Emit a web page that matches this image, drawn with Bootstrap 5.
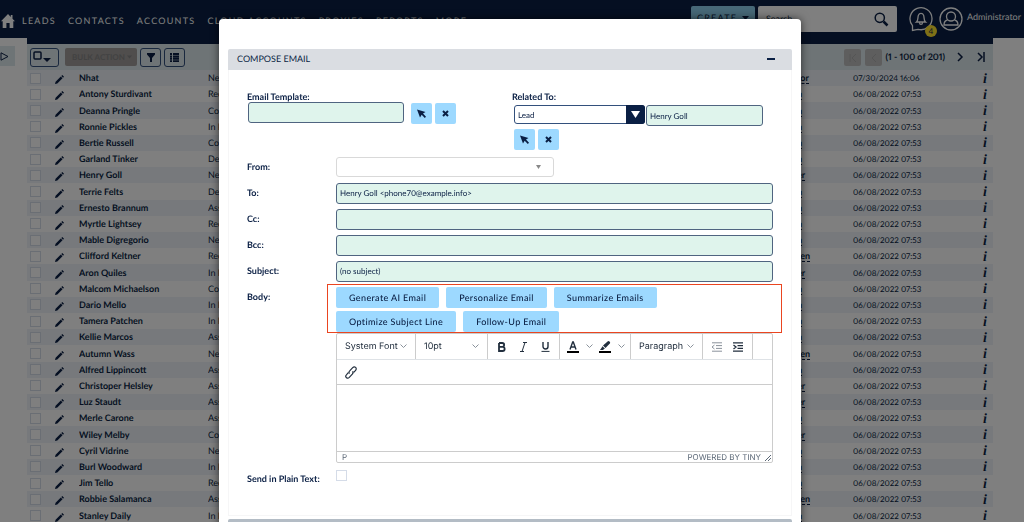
<!DOCTYPE html>
<html lang="en">
<head>
<meta charset="utf-8">
<meta name="viewport" content="width=device-width, initial-scale=1">
<title>Leads - Compose Email</title>
<link href="https://cdn.jsdelivr.net/npm/bootstrap@5.3.0/dist/css/bootstrap.min.css" rel="stylesheet">
<style>
:root{--navy:#0a1f44;--sky:#9dd9ff;--mint:#dff4ec}
body{font-family:Lato,sans-serif;font-size:9px;line-height:12px;color:var(--navy);background:#fff;text-rendering:geometricPrecision;font-variant-numeric:proportional-nums}
button,input,select{font-family:inherit;text-rendering:inherit}
a{color:inherit;text-decoration:none}
svg{display:block;flex:none}
/* top bar */
.topbar{background:var(--navy);height:38px;color:#fff}
.topbar .mainnav{gap:12px;padding:4px 0 0 1px}
.mainnav a{letter-spacing:.14em;white-space:nowrap}
.mainnav .home{margin-right:-5px}
.create{background:#8fd0ee;color:var(--navy);width:64px;height:26px;font-size:9px;letter-spacing:.14em;border:0;border-radius:2px;padding:0 6px 3px 6px}
.searchbox{background:#fff;border-radius:2px;width:139px;height:26px;margin-left:3px;padding:0 8px}
.searchbox input{border:0;outline:0;width:100%;font-size:9px;background:none;padding:0}
.searchbox input::placeholder{color:var(--navy)}
.bell{margin-left:12px}
.who{margin-right:-6px}
.count{right:-4px;bottom:-5px;width:12px;height:12px;background:#ffe22e;color:var(--navy);font-size:8px}
/* list view */
.sheet{margin:0 31px 0 27px;border-top:6px solid var(--navy)}
.strip{background:#dde8ec;height:26px;padding:0 3px}
.tool{border:1px solid #33507c;border-radius:3px;background:none;height:19px;width:21px;padding:0;color:var(--navy)}
.tool.wide{width:29px}
.bulk{background:#a09c9a;border:0;border-radius:2px;width:72px;height:18px;font-size:8px;font-weight:700;color:#858585;white-space:nowrap;padding:0 5px 0 7px}
.pg{background:#bdbdbd;border:0;border-radius:2px;width:17px;height:17px;color:#999;padding:0}
.leads{width:100%;table-layout:fixed;height:454px}
.leads td{padding:0;height:16px;line-height:14px;white-space:nowrap;overflow:hidden;vertical-align:middle}
.leads tr:nth-child(odd){background:#eef3f8}
.leads input,.plain{appearance:none;width:11px;height:11px;border:1px solid #d5dce8;background:#fff;margin:0;display:block}
.leads input{margin-left:3px}
.leads .own a{border-bottom:1px dashed var(--navy);display:inline-block;line-height:10px}
.leads .when{font-size:8px}
.leads .inf{font:italic bold 14px/12px "Liberation Serif",serif;padding:3px 6px 0 0;text-align:right}
.sidetab{left:0;top:46px;width:15px;height:20px;background:#dde8ec}
/* dialog */
.modal-backdrop{--bs-backdrop-opacity:.5}
.compose{max-width:582px;margin:19px auto 0;padding:0}
.modal{padding-right:4px}
.compose .modal-content{border:0;border-radius:4px;padding:30px 9px 0;box-shadow:0 0 8px rgba(0,0,0,.6);color:var(--navy);overflow:hidden}
.bar{background:#dadde2;height:21px;padding:0 17px 2px 9px;border-radius:2px 2px 0 0}
.bar.next{background:#b3bcc5;margin-top:3px}
.box{border:1px solid #f6f6f7;border-top:0;padding:21px 18px 30px;margin-bottom:0}
.lab{font-weight:700;width:89px;flex:none}
.field{background:var(--mint);border:1px solid #4f6480;border-radius:3px;height:21px;padding:0 3px;font-size:8px;color:var(--navy);min-width:0}
.formrow{height:26px}
.mini{background:var(--sky);border:0;border-radius:2px;width:21px;height:21px;padding:0;color:var(--navy)}
.selwrap{width:131px;height:19px}
.selwrap select{appearance:none;width:100%;height:19px;border:1px solid #33507c;border-radius:3px;padding:0 3px;background:#fff;color:var(--navy);font-size:8px}
.selwrap .arr{right:0;top:0;width:19px;height:19px;background:var(--navy);border-radius:0 3px 3px 0;pointer-events:none}
.fromwrap{width:218px}
.fromwrap select{appearance:none;width:100%;height:20px;border:1px solid #d9d9d9;border-radius:3px;background:#fff;display:block}
.fromwrap svg{right:13px;top:8px;pointer-events:none}
.ai{border:1px solid #ea4520;margin:0 -9px;padding:2px 8px 0;gap:3px 7px}
.ai button{background:var(--sky);border:0;border-radius:2px;height:21px;padding:0 13px;font-size:9px;letter-spacing:.04em;color:var(--navy);font-weight:500}
.tiny{border:1px solid #ccc;border-radius:2px;font-family:Inter,sans-serif;color:#222f3e}
.tiny button{background:none;border:0;padding:0;color:inherit;font-size:9px}
.tb{height:25px}
.tiny .grp{border-right:1px solid #ccc;height:25px;padding:0 8px}
.edit{border-top:1px solid #ccc;height:67px}
.foot{border-top:1px solid #ccc;height:11px;font-size:8px;line-height:11px;padding:0 0 0 5px;color:#5c6877}
</style>
</head>
<body class="modal-open overflow-hidden">
<header class="topbar d-flex">
  <nav class="mainnav d-flex align-items-center">
    <a href="#" aria-label="Home" class="home"><svg width="14" height="14" viewBox="0 0 14 14" fill="#fff"><path d="M7 0 0 7.3h1.7V14h3.7V9h3.2v5h3.7V7.3H14L11.5 4.700V1H9.800v1.900z"/></svg></a>
    <a href="#">LEADS</a><a href="#">CONTACTS</a><a href="#">ACCOUNTS</a><a href="#">CLOUD ACCOUNTS</a><a href="#">PROXIES</a><a href="#">REPORTS</a><a href="#">MORE</a>
  </nav>
  <div class="tools d-flex align-items-center ms-auto">
    <button class="create d-flex align-items-center justify-content-between">CREATE <svg width="7" height="4" viewBox="0 0 7 4" fill="#0a1f44"><path d="M0 0h7L3.500 4z"/></svg></button>
    <div class="searchbox d-flex align-items-center"><input type="text" placeholder="Search..." aria-label="Search"><svg width="15" height="15" viewBox="0 0 15 15" fill="none" stroke="#0a1f44"><circle cx="5.800" cy="5.800" r="4.600" stroke-width="1.500"/><path d="m9.500 9.500 4 4" stroke-width="2.500"/></svg></div>
    <a href="#" class="bell position-relative" aria-label="Notifications"><svg width="24" height="26" viewBox="0 0 24 26" fill="none" stroke="#fff" stroke-width="1.300"><path d="M3.500 24.500v-4.800A11 11 0 1 1 9 23.300z"/><path d="M7.500 16c2-1.500 1-5 2-7 1-2.300 4-2.300 5 0 1 2 0 5.500 2 7zM10.500 16.500c0 2.500 3 2.500 3 0"/></svg><span class="count position-absolute rounded-circle d-flex align-items-center justify-content-center">4</span></a>
    <a href="#" aria-label="Profile" style="margin-left:6px"><svg width="24" height="24" viewBox="0 0 24 24" fill="none" stroke="#fff" stroke-width="1.300"><circle cx="12" cy="12" r="11"/><circle cx="12" cy="9.500" r="4.500"/><path d="M8.500 13C6 13.500 5 15 5 18h14c0-3-1-4.500-3.500-5"/></svg></a>
    <a href="#" class="who d-flex align-items-center gap-1 pb-1 ms-1">Administrator <svg width="5" height="4" viewBox="0 0 5 4" fill="#fff"><path d="M0 0h5L2.500 4z"/></svg></a>
  </div>
</header>
<button class="sidetab position-absolute border-0 p-0" aria-label="Expand sidebar"><svg width="9" height="9" viewBox="0 0 9 9" fill="none" stroke="#0a1f44"><path d="M1 .8 8 4.500 1 8.200z"/></svg></button>
<main class="sheet">
  <div class="strip d-flex align-items-center">
    <button class="tool wide d-flex align-items-center" aria-label="Select"><svg width="22" height="14" viewBox="0 0 22 14" fill="none" stroke="#0a1f44"><rect x="3" y="2" width="7" height="7" rx="1" stroke-width="1.500"/><path d="M12 8h8l-4 4z" fill="#0a1f44" stroke="none"/></svg></button>
    <button class="bulk d-flex align-items-center justify-content-between" style="margin:0 3px 0 6px" disabled>BULK ACTION<svg width="5" height="4" viewBox="0 0 7 4" fill="#858585"><path d="M0 0h7L3.500 4z"/></svg></button>
    <button class="tool d-flex align-items-center justify-content-center" aria-label="Filter"><svg width="8" height="9" viewBox="0 0 8 9" fill="#0a1f44"><path d="M0 0h8v1.500L5 5v4H3V5L0 1.500z"/></svg></button>
    <button class="tool d-flex align-items-center justify-content-center" style="margin-left:3px" aria-label="Columns"><svg width="9" height="9" viewBox="0 0 9 9" fill="#0a1f44"><path d="M0 0h2v2H0zM3 0h6v2H3zM0 2.400h2v2H0zM3 2.400h6v2H3zM0 4.800h2v2H0zM3 4.800h6v2H3zM0 7.200h2V9H0zM3 7.200h6V9H3z"/></svg></button>
    <div class="d-flex align-items-center ms-auto">
      <button class="pg" aria-label="First page" disabled><svg width="17" height="17" viewBox="0 0 17 17" fill="none" stroke="#aaa"><path d="M6 5v8M12 5 8 9l4 4"/></svg></button>
      <button class="pg ms-1" aria-label="Previous page" disabled><svg width="17" height="17" viewBox="0 0 17 17" fill="none" stroke="#aaa"><path d="m11 5-4 4 4 4"/></svg></button>
      <b class="ms-1 text-nowrap">(1 - 100 of 201)</b>
      <a href="#" aria-label="Next page" style="margin-left:12px"><svg width="7" height="10" viewBox="0 0 7 10" fill="none" stroke="#0a1f44" stroke-width="1.500"><path d="m1 1 4 4-4 4"/></svg></a>
      <a href="#" aria-label="Last page" style="margin:0 5px 0 13px"><svg width="8" height="10" viewBox="0 0 8 10" fill="none" stroke="#0a1f44" stroke-width="1.500"><path d="m1 1 4 4-4 4M7 0v10"/></svg></a>
    </div>
  </div>
  <table class="leads">
    <colgroup><col style="width:28px"><col style="width:24px"><col style="width:129px"><col><col style="width:56px"><col style="width:114px"><col style="width:26px"></colgroup>
    <tbody id="rows"></tbody>
  </table>
</main>

<div class="modal-backdrop show"></div>
<div class="modal d-block overflow-hidden" role="dialog" aria-label="Compose email">
  <div class="modal-dialog compose">
    <div class="modal-content">
      <div class="bar d-flex align-items-center justify-content-between"><span>COMPOSE EMAIL</span><svg width="8" height="2"><rect width="8" height="2" fill="#0a1f44"/></svg></div>
      <form class="box">
        <div class="row g-0">
          <div class="col-6">
            <label class="fw-bold d-block" for="tpl">Email Template:</label>
            <div class="d-flex align-items-center" style="padding-left:1px;margin-top:-3px">
              <input class="field" id="tpl" style="width:156px" type="text">
              <button type="button" class="mini d-flex align-items-center justify-content-center" style="margin:3px 3px 0 7px" aria-label="Pick template"><svg width="9" height="9" viewBox="0 0 9 9" fill="#0a1f44"><path d="M0 .5 8.500 3 6 4.500 9 7.800 7.800 9 4.700 5.800 3 8.500z"/></svg></button>
              <button type="button" class="mini d-flex align-items-center justify-content-center" style="margin-top:3px" aria-label="Clear template"><svg width="7" height="7" viewBox="0 0 7 7" stroke="#0a1f44" stroke-width="2"><path d="m1 1 5 5M6 1 1 6"/></svg></button>
            </div>
          </div>
          <div class="col-6" style="padding-left:2px">
            <label class="fw-bold d-block" for="rel">Related To:</label>
            <div class="d-flex flex-wrap" style="gap:3px 1px;padding:2px 0 0 2px">
              <div class="selwrap position-relative"><select id="rel"><option>Lead</option></select><span class="arr position-absolute d-flex align-items-center justify-content-center"><svg width="9" height="7" viewBox="0 0 9 7" fill="#fff"><path d="M0 0h9L4.500 7z"/></svg></span></div>
              <input class="field" style="width:117px" type="text" value="Henry Goll" aria-label="Related record">
              <div class="d-flex w-100" style="gap:3px">
                <button type="button" class="mini d-flex align-items-center justify-content-center" aria-label="Pick record"><svg width="9" height="9" viewBox="0 0 9 9" fill="#0a1f44"><path d="M0 .5 8.500 3 6 4.500 9 7.800 7.800 9 4.700 5.800 3 8.500z"/></svg></button>
                <button type="button" class="mini d-flex align-items-center justify-content-center" aria-label="Clear record"><svg width="7" height="7" viewBox="0 0 7 7" stroke="#0a1f44" stroke-width="2"><path d="m1 1 5 5M6 1 1 6"/></svg></button>
              </div>
            </div>
          </div>
        </div>
        <div class="formrow d-flex align-items-center" style="margin-top:4px"><label class="lab" for="from">From:</label><div class="fromwrap position-relative"><select id="from"></select><svg class="position-absolute" width="5" height="4" viewBox="0 0 5 4" fill="#888"><path d="M0 0h5L2.500 4z"/></svg></div></div>
        <div class="formrow d-flex align-items-center"><label class="lab" for="to">To:</label><input class="field flex-fill" id="to" type="text" value="Henry Goll &lt;phone70@example.info&gt;"></div>
        <div class="formrow d-flex align-items-center"><label class="lab" for="cc">Cc:</label><input class="field flex-fill" id="cc" type="text"></div>
        <div class="formrow d-flex align-items-center"><label class="lab" for="bcc">Bcc:</label><input class="field flex-fill" id="bcc" type="text"></div>
        <div class="formrow d-flex align-items-center"><label class="lab" for="subj">Subject:</label><input class="field flex-fill" id="subj" type="text" value="(no subject)"></div>
        <div class="d-flex">
          <span class="lab" style="padding-top:7px">Body:</span>
          <div class="flex-fill">
            <div class="ai d-flex flex-wrap">
              <button type="button">Generate AI Email</button><button type="button">Personalize Email</button><button type="button">Summarize Emails</button><button type="button">Optimize Subject Line</button><button type="button">Follow-Up Email</button>
            </div>
            <div class="tiny">
              <div class="tb d-flex">
                <button type="button" class="grp d-flex align-items-center justify-content-between" style="width:79px"><span>System Font</span><svg width="7" height="5" viewBox="0 0 7 5" fill="none" stroke="#8a929b"><path d="m.5.5 3 3 3-3"/></svg></button>
                <button type="button" class="grp d-flex align-items-center justify-content-between" style="width:72px"><span>10pt</span><svg width="7" height="5" viewBox="0 0 7 5" fill="none" stroke="#8a929b"><path d="m.5.5 3 3 3-3"/></svg></button>
                <div class="grp d-flex align-items-center justify-content-between" style="width:72px;padding:0 9px">
                  <button type="button" aria-label="Bold"><svg width="9" height="10" viewBox="0 0 9 10" fill="none" stroke="#222f3e" stroke-width="1.800"><path d="M2 1h3.200a1.900 1.900 0 0 1 0 3.900H2M2 4.900h3.600a2 2 0 0 1 0 4.100H2zM2 1v8"/></svg></button>
                  <button type="button" aria-label="Italic"><svg width="7" height="10" viewBox="0 0 7 10" fill="none" stroke="#222f3e"><path d="M3 .5h4M0 9.500h4M5 .5l-3 9"/></svg></button>
                  <button type="button" aria-label="Underline"><svg width="9" height="10" viewBox="0 0 9 10" fill="none" stroke="#222f3e"><path d="M2 0v4.500a2.500 2.500 0 0 0 5 0V0" stroke-width="1.400"/><path d="M.5 9.400h8"/></svg></button>
                </div>
                <div class="grp d-flex align-items-center justify-content-between" style="width:71px;padding:0 5px 0 7px">
                  <button type="button" aria-label="Text color"><svg width="12" height="12" viewBox="0 0 12 12" fill="none" stroke="#222f3e" stroke-width="1.400"><path d="M3 8.500 5.700 1h.6L9 8.500M4 6h4"/><path d="M0 11h12" stroke="#000" stroke-width="2"/></svg></button>
                  <svg width="7" height="5" viewBox="0 0 7 5" fill="none" stroke="#8a929b"><path d="m.5.5 3 3 3-3"/></svg>
                  <button type="button" aria-label="Background color"><svg width="12" height="12" viewBox="0 0 12 12" fill="#222f3e"><path d="M10.500.6a1.500 1.500 0 0 0-2.200.1L4 4.500 6.500 7 10.600 2.800a1.500 1.500 0 0 0-.1-2.200zM3.400 5.200 2.600 6.700 1 9h3l.8-.7 1.100-.7z"/><path d="M0 10h12v2H0z" fill="#000"/></svg></button>
                  <svg width="7" height="5" viewBox="0 0 7 5" fill="none" stroke="#8a929b"><path d="m.5.5 3 3 3-3"/></svg>
                </div>
                <button type="button" class="grp d-flex align-items-center justify-content-between" style="width:72px"><span>Paragraph</span><svg width="7" height="5" viewBox="0 0 7 5" fill="none" stroke="#8a929b"><path d="m.5.5 3 3 3-3"/></svg></button>
                <div class="grp d-flex align-items-center justify-content-between" style="width:50px">
                  <button type="button" aria-label="Outdent"><svg width="11" height="10" viewBox="0 0 11 10" fill="none" stroke="#8a929b"><path d="M1 .8h10M5 3.600h6M5 6.400h6M1 9.200h10M3.500 3 1 5l2.500 2"/></svg></button>
                  <button type="button" aria-label="Indent"><svg width="11" height="10" viewBox="0 0 11 10" fill="none" stroke="#222f3e" stroke-width="1.300"><path d="M0 .8h10M4.500 3.600H10M4.500 6.400H10M0 9.200h10M.5 3 3 5 .5 7"/></svg></button>
                </div>
              </div>
              <div class="tb d-flex align-items-center border-top px-2"><button type="button" aria-label="Insert link"><svg width="12" height="13" viewBox="0 0 12 13" fill="none" stroke="#222f3e" stroke-width="1.200"><path d="M4.500 7.700C3.600 6.500 4 5.600 4.700 4.900L7.700 1.700c1-1.100 2.200-.9 2.900-.3.800.7.900 1.900 0 2.900L8.700 6.400M7.500 5.300c.9 1.200.6 2-.2 2.900l-3 3.200c-1 1-2.200.9-2.900.2s-.9-1.900 0-2.800L3.300 6.700"/></svg></button></div>
              <div class="edit" contenteditable="true" role="textbox" aria-label="Body"></div>
              <div class="foot d-flex justify-content-between"><span>P</span><span class="d-flex" style="gap:3px"><span>POWERED BY TINY</span><svg width="8" height="10" viewBox="0 0 8 10" stroke="#5c6877"><path d="m1 9 6-6M4 9l3-3"/></svg></span></div>
            </div>
          </div>
        </div>
        <div class="d-flex" style="margin-top:7px"><label class="lab" style="padding-top:3px" for="plain">Send in Plain Text:</label><input type="checkbox" class="plain" id="plain"></div>
      </form>
      <div class="bar next"></div>
    </div>
  </div>
</div>
<script src="https://cdn.jsdelivr.net/npm/bootstrap@5.3.0/dist/js/bootstrap.bundle.min.js"></script>
<script>
const leads = [["Nhat","New","tor"],["Antony Sturdivant","Recycled","n"],["Deanna Pringle","Converted","n"],["Ronnie Pickles","In Process","n"],["Bertie Russell","Converted","n"],["Garland Tinker","Dead","n"],["Henry Goll","New","er"],["Terrie Felts","Dead","n"],["Ernesto Brannum","Assigned","n"],["Myrtle Lightsey","Recycled","n"],["Mable Digregorio","New","n"],["Clifford Keltner","Recycled","ten"],["Aron Quiles","In Process","er"],["Malcom Michaelson","Converted","n"],["Dario Mello","In Process","n"],["Tamera Patchen","In Process","n"],["Kellie Marcos","Assigned","n"],["Autumn Wass","New","ten"],["Alfred Lippincott","Assigned","n"],["Christoper Helsley","Assigned","er"],["Luz Staudt","Assigned","er"],["Merle Carone","Assigned","n"],["Wiley Melby","Converted","er"],["Cyril Vidrine","New","n"],["Burl Woodward","In Process","n"],["Jim Tello","Recycled","n"],["Robbie Salamanca","Assigned","ten"],["Stanley Daily","In Process","n"]];
document.getElementById("rows").innerHTML = leads.map(([name, status, owner], i) => `<tr><td><input type="checkbox" aria-label="Select ${name}"></td><td><svg width="9" height="9" viewBox="0 0 9 9" fill="#0a1f44" style="margin-top:3px"><path d="M0 9 .6 6.700 5.800 1.500 7.500 3.200 2.300 8.400zM6.300 1 7.300 0l1.700 1.700-1 1z"/></svg></td><td><a href="#" class="fw-bold">${name}</a></td><td>${status}</td><td class="own"><a href="#" class="fw-bold">${owner}</a></td><td class="when">${i ? "06/08/2022 07:53" : "07/30/2024 16:06"}</td><td class="inf">i</td></tr>`).join("");
</script>
</body>
</html>
